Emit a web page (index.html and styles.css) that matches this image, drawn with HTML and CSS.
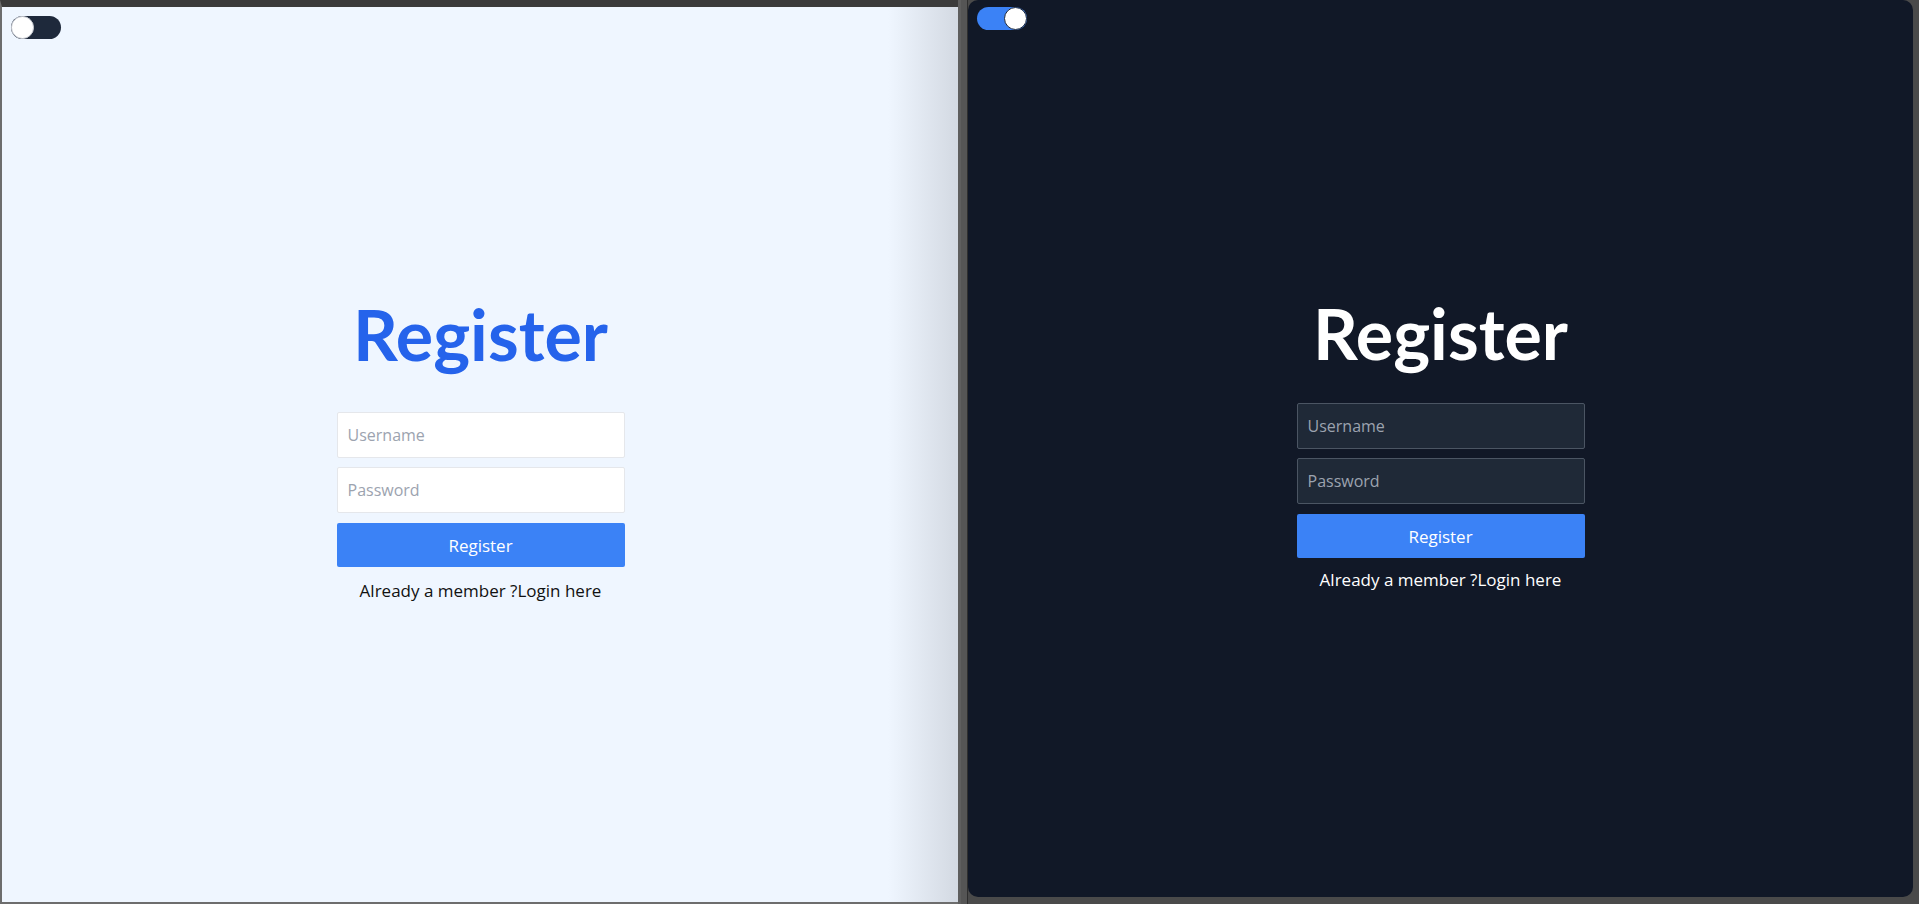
FILE: index.html
```html
<!DOCTYPE html>
<html lang="en">
<head>
<meta charset="utf-8">
<title>Register</title>
<link rel="stylesheet" href="styles.css">
</head>
<body>
<div class="screen">
  <div class="left-frame">
    <section class="panel panel-light">
      <div class="toggle toggle-off"><span class="knob"></span></div>
      <div class="content content-light">
        <h1 class="title title-light">Register</h1>
        <form class="form">
          <input class="field field-light" type="text" placeholder="Username">
          <input class="field field-light field-second" type="password" placeholder="Password">
          <button class="btn" type="button">Register</button>
          <p class="note note-light">Already a member ?Login here</p>
        </form>
      </div>
    </section>
  </div>
  <div class="divider"></div>
  <div class="right-frame">
    <section class="panel panel-dark">
      <div class="toggle toggle-on"><span class="knob"></span></div>
      <div class="content content-dark">
        <h1 class="title title-dark">Register</h1>
        <form class="form">
          <input class="field field-dark" type="text" placeholder="Username">
          <input class="field field-dark field-second" type="password" placeholder="Password">
          <button class="btn" type="button">Register</button>
          <p class="note note-dark">Already a member ?Login here</p>
        </form>
      </div>
    </section>
  </div>
</div>
</body>
</html>
```

FILE: styles.css
```css
* { box-sizing: border-box; }
html, body {
  margin: 0;
  padding: 0;
  width: 1919px;
  height: 904px;
  overflow: hidden;
  background: #4b4b4b;
  font-family: "Open Sans", "Liberation Sans", sans-serif;
}
.screen {
  display: flex;
  width: 1919px;
  height: 904px;
}
.left-frame {
  width: 958px;
  height: 904px;
  border-top: 7px solid #3b3b3b;
  border-left: 2px solid #6d6d6d;
  border-bottom: 2px solid #6d6d6d;
  display: flex;
}
.divider {
  width: 10px;
  height: 904px;
  background: linear-gradient(to right, #5e5e5e 0, #5e5e5e 3px, #555 3px, #555 9px, #2e2e2e 9px);
}
.right-frame {
  flex: 1;
  height: 904px;
  padding: 0 6px 7px 0;
  display: flex;
  background: #4a4a4a;
}
.panel {
  flex: 1;
  display: flex;
  flex-direction: column;
  padding: 9px;
}
.panel-light {
  background: linear-gradient(to right, #eff6ff calc(100% - 70px), #d3d9e2 100%);
}
.panel-dark {
  background: #111827;
  border-radius: 10px;
  padding-top: 7px;
}
.toggle {
  width: 50px;
  height: 23px;
  border-radius: 12px;
  display: flex;
  align-items: center;
}
.toggle-off { background: #1e293b; justify-content: flex-start; }
.toggle-on { background: #3b82f6; justify-content: flex-end; }
.knob {
  width: 23px;
  height: 23px;
  border-radius: 50%;
  background: #ffffff;
  border: 1px solid #c9ccd3;
}
.toggle-on .knob { border-color: #1e293b; }
.content {
  display: flex;
  flex-direction: column;
  align-items: center;
}
.content-light { margin-top: 259px; padding-left: 1px; }
.content-dark { margin-top: 267px; }
.title {
  margin: 0;
  font-family: Lato, "Open Sans", sans-serif;
  font-weight: 700;
  font-size: 70px;
  line-height: 72px;
}
.title-light { color: #2563eb; margin-bottom: 42px; }
.title-dark { color: #ffffff; margin-bottom: 34px; }
.form {
  width: 288px;
  display: flex;
  flex-direction: column;
  margin: 0;
}
.field {
  width: 288px;
  height: 46px;
  padding: 0 10px;
  font-family: "Open Sans", sans-serif;
  font-size: 16px;
  border-radius: 2px;
  outline: none;
}
.field-second { margin-top: 9px; }
.field-light {
  background: #ffffff;
  border: 1px solid #e5e7eb;
  color: #111827;
}
.field-dark {
  background: #1f2937;
  border: 1px solid #4b5563;
  color: #f9fafb;
}
.field-light::placeholder { color: #9ca3af; }
.field-dark::placeholder { color: #9ca3af; }
.btn {
  margin-top: 10px;
  height: 44px;
  border: none;
  border-radius: 2px;
  background: #3b82f6;
  color: #ffffff;
  font-family: "Open Sans", sans-serif;
  font-size: 17px;
}
.note {
  margin: 10px 0 0;
  text-align: center;
  font-size: 17px;
  line-height: 28px;
}
.note-light { color: #111111; }
.note-dark { color: #ffffff; margin-top: 8px; }
```
